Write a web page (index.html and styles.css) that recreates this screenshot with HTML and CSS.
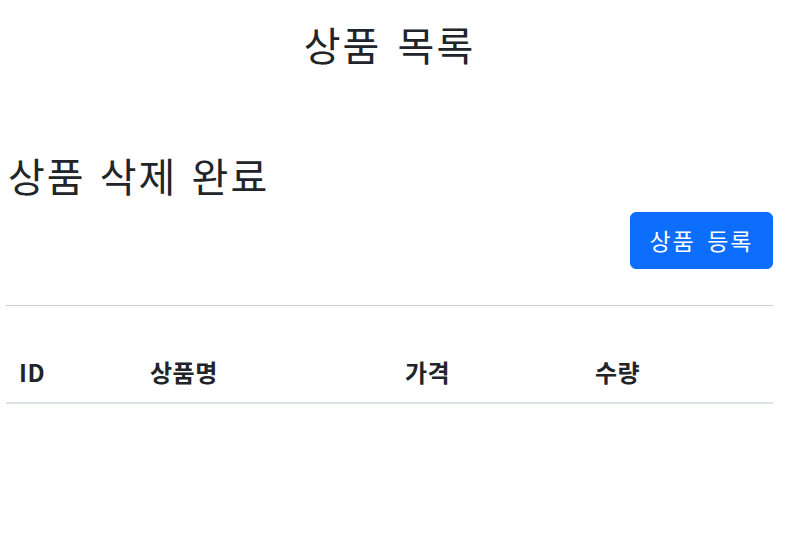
FILE: index.html
```html
<!DOCTYPE html>
<html lang="ko">
<head>
<meta charset="utf-8">
<title>상품 목록</title>
<link rel="stylesheet" href="styles.css">
</head>
<body>
<div class="container">
  <h2 class="page-title">상품 목록</h2>
  <h2 class="status">상품 삭제 완료</h2>
  <div class="actions">
    <button class="btn-primary" type="button">상품 등록</button>
  </div>
  <hr class="divider">
  <table class="table">
    <thead>
      <tr>
        <th class="col-id">ID</th>
        <th class="col-name">상품명</th>
        <th class="col-price">가격</th>
        <th class="col-qty">수량</th>
      </tr>
    </thead>
    <tbody></tbody>
  </table>
</div>
</body>
</html>
```

FILE: styles.css
```css
* { box-sizing: border-box; }
html, body { margin: 0; padding: 0; background: #fff; }
body {
  font-family: "Noto Sans CJK KR", "Noto Sans", sans-serif;
  color: #212529;
  font-size: 22px;
}
.container {
  margin-left: 6px;
  width: 767px;
}
.page-title {
  margin: 0;
  padding-top: 20px;
  font-size: 40px;
  line-height: 48px;
  font-weight: 400;
  text-align: center;
  letter-spacing: 2px;
  word-spacing: 3px;
}
.status {
  margin: 83px 0 0 2px;
  font-size: 40px;
  line-height: 48px;
  font-weight: 400;
  letter-spacing: 2px;
  word-spacing: 1px;
}
.actions {
  display: flex;
  justify-content: flex-end;
  margin-top: 13px;
}
.btn-primary {
  font-family: inherit;
  font-size: 23px;
  line-height: 33px;
  height: 57px;
  width: 143px;
  padding: 0;
  color: #fff;
  background: #0d6efd;
  border: 1px solid #0d6efd;
  border-radius: 6px;
  letter-spacing: 2px;
  word-spacing: 3px;
}
.divider {
  margin: 36px 0 0 0;
  border: 0;
  border-top: 1px solid #cfcfcf;
  height: 0;
}
.table {
  margin-top: 36px;
  width: 100%;
  border-collapse: collapse;
}
.table th {
  text-align: left;
  font-weight: 700;
  font-size: 24px;
  line-height: 30px;
  letter-spacing: 0.5px;
  padding: 15px 12px 15px 13px;
  border-bottom: 2px solid #dee2e6;
}
.col-id { width: 131px; }
.col-name { width: 255px; }
.col-price { width: 190px; }
.col-qty { width: 191px; }
```
